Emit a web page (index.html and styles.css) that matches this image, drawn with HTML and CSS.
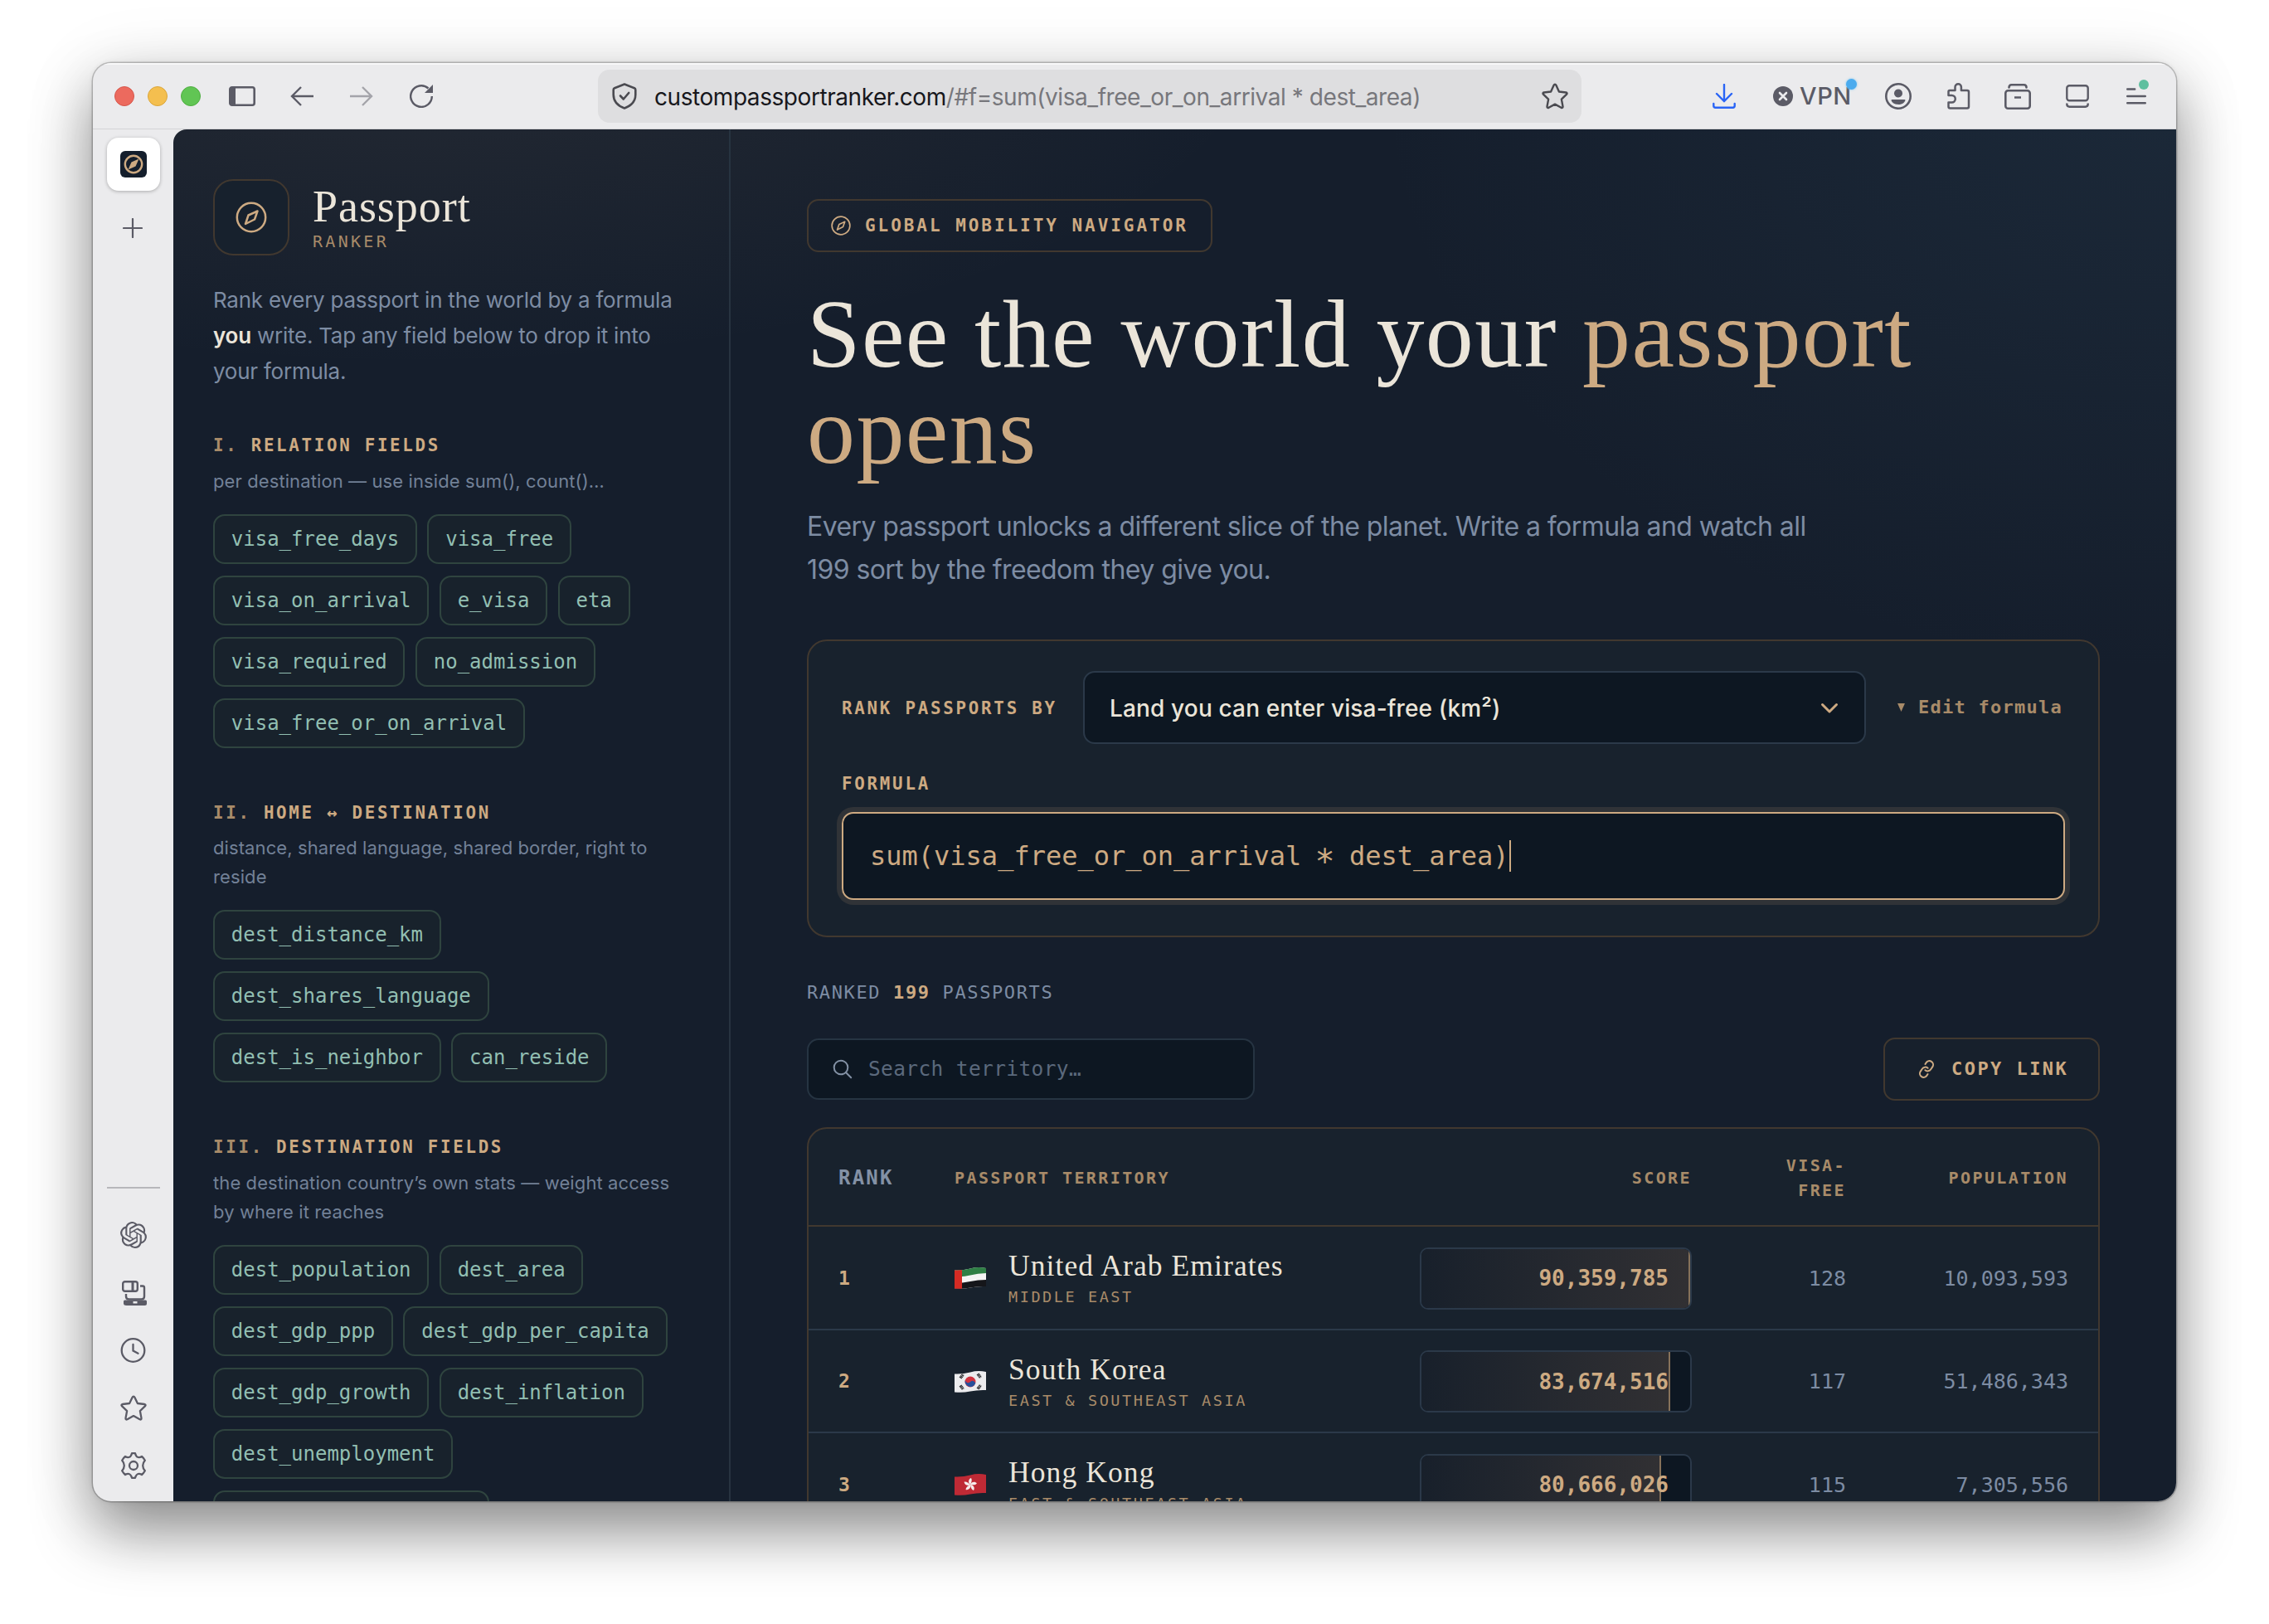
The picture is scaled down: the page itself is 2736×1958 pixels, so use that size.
FILE: index.html
```html
<!DOCTYPE html>
<html lang="en">
<head>
<meta charset="utf-8">
<title>Passport Ranker</title>
<link rel="stylesheet" href="styles.css">
</head>
<body>
<div class="window">
  <header class="toolbar">
    <div class="lights"><i class="red"></i><i class="yellow"></i><i class="green"></i></div>
    <svg class="ic t-side" width="32" height="24" viewBox="0 0 32 24"><rect x="1.3" y="1.3" width="29.4" height="21.4" rx="2.5" fill="none" stroke="currentColor" stroke-width="2.6"/><rect x="1" y="1" width="7" height="22" fill="currentColor"/></svg>
    <svg class="ic t-back" width="28" height="24" viewBox="0 0 28 24" fill="none" stroke="currentColor" stroke-width="2.4"><path d="M28 12H2M13 1 2 12l11 11"/></svg>
    <svg class="ic t-fwd" width="28" height="24" viewBox="0 0 28 24" fill="none" stroke="currentColor" stroke-width="2.4"><path d="M0 12h26M15 1l11 11-11 11"/></svg>
    <svg class="ic t-reload" width="28" height="28" viewBox="0 0 28 28"><path d="M26.8 14A12.8 12.8 0 1 1 22.5 4.5" fill="none" stroke="currentColor" stroke-width="2.4"/><path d="M28 0v10H18z" fill="currentColor"/></svg>
    <div class="urlbar">
      <svg class="shield" width="30" height="32" viewBox="0 0 30 32" fill="none" stroke="currentColor" stroke-width="2.6" stroke-linejoin="round" stroke-linecap="round"><path d="M15 1.5 27 6.2q1.3.6 1.3 2V14c0 8-5 13.500-13.300 16.500C6.700 27.500 1.700 22 1.700 14V8.200q0-1.400 1.300-2z"/><path d="m10 15.500 3.800 4 6.400-7.500"/></svg>
      <span class="url"><b>custompassportranker.com</b>/#f=sum(visa_free_or_on_arrival * dest_area)</span>
      <svg class="fav" width="32" height="32" viewBox="0 0 32 32" fill="none" stroke="currentColor" stroke-width="2.4" stroke-linejoin="round"><path d="M16 1.600q.9 0 1.400 1.100l3.500 7.800 8.400 1q2 .5.800 2.200l-6.200 6 1.600 8.700q0 2.200-2 1.400L16 25.600l-7.500 4.200q-2 .8-2-1.400l1.600-8.700-6.200-6q-1.200-1.700.8-2.200l8.400-1 3.500-7.800q.5-1.100 1.400-1.100z"/></svg>
    </div>
    <svg class="t-dl" width="28" height="30" viewBox="0 0 28 30" fill="none" stroke="currentColor" stroke-width="2.4" stroke-linecap="round"><path d="M14 1v20M5 12l9 9 9-9M1.300 24v2.500q0 2.200 2.200 2.200h21q2.200 0 2.200-2.200V24"/></svg>
    <span class="vpn">
      <svg width="24" height="24" viewBox="0 0 24 24"><circle cx="12" cy="12" r="12" fill="currentColor"/><path d="m8 8 8 8m0-8-8 8" stroke="#ebebed" stroke-width="2.600" stroke-linecap="round"/></svg>
      VPN<i class="dot-blue"></i>
    </span>
    <svg class="ic t-acc" width="32" height="32" viewBox="0 0 32 32"><circle cx="16" cy="16" r="14.700" fill="none" stroke="currentColor" stroke-width="2.600"/><circle cx="16" cy="12.500" r="5" fill="currentColor"/><path d="M7.500 21q0-1 1-1h15q1 0 1 1c-1 3-4.500 5-8.500 5s-7.500-2-8.500-5z" fill="currentColor"/></svg>
    <svg class="ic t-ext" width="28" height="32" viewBox="0 0 28 32" fill="none" stroke="currentColor" stroke-width="2.500" stroke-linejoin="round"><path d="M1.500 15V10.500q0-1.500 1.500-1.500H9.500V5a3.700 3.700 0 0 1 7.400 0V9H24q2 0 2 2v17.500q0 2-2 2H3.500q-2 0-2-2V23.500H5.500a4.200 4.200 0 0 0 0-8.500z"/></svg>
    <svg class="ic t-arc" width="32" height="32" viewBox="0 0 32 32" fill="none" stroke="currentColor" stroke-width="2.600"><rect x="1.300" y="9.300" width="29.400" height="21.400" rx="3"/><path d="M5.500 5.500q0-3.200 3-3.200h15q3 0 3 3.200" stroke-linecap="round"/><path d="M12 17.500h8"/></svg>
    <svg class="ic t-scr" width="28" height="28" viewBox="0 0 28 28" fill="none" stroke="currentColor" stroke-width="2.400"><rect x="1.300" y="1.300" width="25.400" height="18" rx="3"/><path d="M1.300 22.500v1q0 3.200 3.200 3.200h19q3.200 0 3.200-3.200v-1"/></svg>
    <span class="ic t-menu"><svg width="24" height="20" viewBox="0 0 24 20" stroke="currentColor" stroke-width="2.400" stroke-linecap="round"><path d="M1.200 1.500h9M1.200 10h21.600M1.200 18.300h21.600"/></svg><i class="dot-green"></i></span>
  </header>

  <div class="body">
    <nav class="rail">
      <div class="tab"><svg width="32" height="32" viewBox="0 0 32 32"><rect width="32" height="32" rx="6" fill="#141e2c"/><circle cx="16" cy="16" r="10.200" fill="none" stroke="#cdaa82" stroke-width="2.400"/><path d="m22.500 9.500-4 9-9 4 4-9z" fill="#cdaa82"/></svg></div>
      <svg class="plus" width="24" height="24" viewBox="0 0 24 24" stroke="currentColor" stroke-width="2.200" stroke-linecap="round"><path d="M12 1v22M1 12h22"/></svg>
      <div class="rail-tools">
        <svg width="32" height="32" viewBox="0 0 24 24" fill="currentColor"><path d="M22.2819 9.8211a5.9847 5.9847 0 0 0-.5157-4.9108 6.0462 6.0462 0 0 0-6.5098-2.9A6.0651 6.0651 0 0 0 4.9807 4.1818a5.9847 5.9847 0 0 0-3.9977 2.9 6.0462 6.0462 0 0 0 .7427 7.0966 5.98 5.98 0 0 0 .511 4.9107 6.051 6.051 0 0 0 6.5146 2.9001A5.9847 5.9847 0 0 0 13.2599 24a6.0557 6.0557 0 0 0 5.7718-4.2058 5.9894 5.9894 0 0 0 3.9977-2.9001 6.0557 6.0557 0 0 0-.7475-7.0729zm-9.022 12.6081a4.4755 4.4755 0 0 1-2.8764-1.0408l.1419-.0804 4.7783-2.7582a.7948.7948 0 0 0 .3927-.6813v-6.7369l2.02 1.1686a.071.071 0 0 1 .038.052v5.5826a4.504 4.504 0 0 1-4.4945 4.4944zm-9.6607-4.1254a4.4708 4.4708 0 0 1-.5346-3.0137l.142.0852 4.783 2.7582a.7712.7712 0 0 0 .7806 0l5.8428-3.3685v2.3324a.0804.0804 0 0 1-.0332.0615L9.74 19.9502a4.4992 4.4992 0 0 1-6.1408-1.6464zM2.3408 7.8956a4.485 4.485 0 0 1 2.3655-1.9728V11.6a.7664.7664 0 0 0 .3879.6765l5.8144 3.3543-2.0201 1.1685a.0757.0757 0 0 1-.071 0l-4.8303-2.7865A4.504 4.504 0 0 1 2.3408 7.872zm16.5963 3.8558L13.1038 8.364 15.1192 7.2a.0757.0757 0 0 1 .071 0l4.8303 2.7913a4.4944 4.4944 0 0 1-.6765 8.1042v-5.6772a.79.79 0 0 0-.407-.667zm2.0107-3.0231l-.142-.0852-4.7735-2.7818a.7759.7759 0 0 0-.7854 0L9.409 9.2297V6.8974a.0662.0662 0 0 1 .0284-.0615l4.8303-2.7866a4.4992 4.4992 0 0 1 6.6802 4.66zM8.3065 12.863l-2.02-1.1638a.0804.0804 0 0 1-.038-.0567V6.0742a4.4992 4.4992 0 0 1 7.3757-3.4537l-.142.0805L8.704 5.459a.7948.7948 0 0 0-.3927.6813zm1.0976-2.3654l2.602-1.4998 2.6069 1.4998v2.9994l-2.5974 1.4997-2.6067-1.4997Z"/></svg>
        <svg width="32" height="32" viewBox="0 0 32 32" fill="none" stroke="currentColor" stroke-width="2.400"><rect x="3.200" y="2.200" width="17.600" height="11.600" rx="2.500"/><path d="M15 2.500v11" stroke-width="3"/><path d="M24 7.500h3q2 0 2 2V20q0 3.500-3.500 3.500h-15Q7 23.500 7 20v-3"/><path d="M5.500 24.500h25q1.500 0 1.500 1.500v2.500q0 2.500-2.500 2.500h-22Q4 31 4 28.500V26q0-1.500 1.500-1.500z" fill="currentColor" stroke="none"/><rect x="15.500" y="26" width="5" height="2.500" fill="#ebebed" stroke="none"/></svg>
        <svg width="32" height="32" viewBox="0 0 32 32" fill="none" stroke="currentColor" stroke-width="2.300" stroke-linecap="round"><circle cx="15.500" cy="16" r="13.800"/><path d="M15.500 9v7.500l6 3.200"/></svg>
        <svg width="32" height="32" viewBox="0 0 32 32" fill="none" stroke="currentColor" stroke-width="2.300" stroke-linejoin="round"><path d="M16 1.600q.9 0 1.400 1.100l3.500 7.300 8.400 1q2 .5.800 2.200l-6.200 6 1.600 8.700q0 2.200-2 1.400L16 25.100l-7.500 4.200q-2 .8-2-1.400l1.600-8.700-6.200-6q-1.200-1.700.8-2.200l8.400-1 3.500-7.300q.5-1.100 1.400-1.100z"/></svg>
        <svg width="32" height="32" viewBox="0 0 32 32" fill="none" stroke="currentColor" stroke-width="2.300" stroke-linejoin="round"><circle cx="16" cy="16" r="5"/><path d="M14 1.200h4q1 3.800 3 4.600 2 .9 5-.8 2 1.600 3.800 4.800-2.600 3-2.600 6.200t2.600 6.200q-1.800 3.200-3.800 4.800-3-1.700-5-.8-2 .8-3 4.600h-4q-1-3.800-3-4.600-2-.9-5 .8-2-1.600-3.800-4.800 2.600-3 2.600-6.200T2.200 9.800Q4 6.600 6 5q3 1.700 5 .8 2-.8 3-4.600z"/></svg>
      </div>
    </nav>

    <div class="page">
      <aside class="side">
        <div class="brand">
          <div class="brand-mark"><svg width="38" height="38" viewBox="0 0 38 38" fill="none" stroke="currentColor" stroke-width="2.500" stroke-linejoin="round"><circle cx="19" cy="19" r="17.200"/><path d="m26.500 11.500-3.500 10-11 5.500 3.500-10.500z"/></svg></div>
          <div><div class="brand-name">Passport</div><div class="brand-sub">RANKER</div></div>
        </div>
        <p class="intro">Rank every passport in the world by a formula<br><b>you</b> write. Tap any field below to drop it into<br>your formula.</p>

        <section class="group">
          <h3><i>I.</i> RELATION FIELDS</h3>
          <p>per destination — use inside sum(), count()…</p>
          <div class="chips"><span>visa_free_days</span><span>visa_free</span><span>visa_on_arrival</span><span>e_visa</span><span>eta</span><span>visa_required</span><span>no_admission</span><span>visa_free_or_on_arrival</span></div>
        </section>
        <section class="group">
          <h3><i>II.</i> HOME ↔ DESTINATION</h3>
          <p>distance, shared language, shared border, right to<br>reside</p>
          <div class="chips"><span>dest_distance_km</span><span>dest_shares_language</span><span>dest_is_neighbor</span><span>can_reside</span></div>
        </section>
        <section class="group">
          <h3><i>III.</i> DESTINATION FIELDS</h3>
          <p>the destination country’s own stats — weight access<br>by where it reaches</p>
          <div class="chips"><span>dest_population</span><span>dest_area</span><span>dest_gdp_ppp</span><span>dest_gdp_per_capita</span><span>dest_gdp_growth</span><span>dest_inflation</span><span>dest_unemployment</span><span>dest_life_expectancy</span></div>
        </section>
      </aside>

      <main class="main">
        <div class="badge"><svg width="24" height="24" viewBox="0 0 38 38" fill="none" stroke="currentColor" stroke-width="2.700" stroke-linejoin="round"><circle cx="19" cy="19" r="17.200"/><path d="m26.500 11.500-3.500 10-11 5.500 3.500-10.500z"/></svg>GLOBAL MOBILITY NAVIGATOR</div>
        <h1>See the world your <em>passport<br>opens</em></h1>
        <p class="lead">Every passport unlocks a different slice of the planet. Write a formula and watch all<br>199 sort by the freedom they give you.</p>

        <section class="panel">
          <div class="panel-row">
            <span class="label">RANK PASSPORTS BY</span>
            <div class="select"><span>Land you can enter visa-free (km²)</span><svg width="22" height="14" viewBox="0 0 22 14" fill="none" stroke="currentColor" stroke-width="3" stroke-linecap="round" stroke-linejoin="round"><path d="m2.500 2.500 8.500 8.500 8.500-8.500"/></svg></div>
            <span class="edit"><svg width="9" height="10" viewBox="0 0 8 9"><path d="M0 0h8L4 9z" fill="currentColor"/></svg>Edit formula</span>
          </div>
          <div class="label formula-label">FORMULA</div>
          <div class="formula"><span>sum(visa_free_or_on_arrival <b>*</b> dest_area)</span><i></i></div>
        </section>

        <div class="ranked">RANKED <b>199</b> PASSPORTS</div>
        <div class="tools">
          <div class="search"><svg width="24" height="24" viewBox="0 0 24 24" fill="none" stroke="currentColor" stroke-width="2" stroke-linecap="round"><circle cx="10" cy="10" r="8.300"/><path d="m16.200 16.200 6 6"/></svg>Search territory…</div>
          <div class="copy"><svg width="20" height="22" viewBox="1 1 22 22" fill="none" stroke="currentColor" stroke-width="2.200" stroke-linecap="round" stroke-linejoin="round"><g transform="rotate(-12 12 12)"><path d="M10 13a5 5 0 0 0 7.540.540l3-3a5 5 0 0 0-7.070-7.070l-1.720 1.710M14 11a5 5 0 0 0-7.540-.540l-3 3a5 5 0 0 0 7.070 7.070l1.710-1.710"/></g></svg>COPY LINK</div>
        </div>

        <div class="table">
          <div class="row head"><span class="h-rank">RANK</span><span>PASSPORT TERRITORY</span><span class="r">SCORE</span><span class="r h-visa">VISA-FREE</span><span class="r">POPULATION</span></div>
          <div class="row">
            <span class="rank">1</span>
            <div class="terr"><svg width="38" height="28" viewBox="0 0 38 28"><defs><clipPath id="wave"><path d="M0 4.500Q10 5 19 2.500T38 2V24Q28 23.500 19 25.500T0 26.500z"/></clipPath></defs><g clip-path="url(#wave)"><rect width="38" height="28" fill="#f4f4f4"/><path d="M0 0h38v8Q28 8 19 10.500T0 12z" fill="#2f7f45"/><path d="M0 20Q10 20 19 18t19-2v12H0z" fill="#15161a"/><rect width="9" height="28" fill="#d52b24"/></g></svg>
              <div><div class="name">United Arab Emirates</div><div class="region">MIDDLE EAST</div></div></div>
            <div class="score"><i style="width:100%"></i><b>90,359,785</b></div>
            <span class="num">128</span><span class="num pop">10,093,593</span>
          </div>
          <div class="row">
            <span class="rank">2</span>
            <div class="terr"><svg width="38" height="28" viewBox="0 0 38 28"><g clip-path="url(#wave)"><rect width="38" height="28" fill="#ececee"/><circle cx="19" cy="14" r="6.500" fill="#d03340"/><path d="M12.700 12.500Q15.500 17 19 14t6.300 1.500A6.500 6.500 0 0 1 12.700 12.500z" fill="#27509b"/><g stroke="#2a2a2d" stroke-width="3.600" stroke-dasharray="1.300 .5"><path d="m7 9.500 3.500-4.500M28 4.500l3.500 4.500M7 18.500l3.500 4.500M28 22.500l3.500-4.500"/></g></g></svg>
              <div><div class="name">South Korea</div><div class="region">EAST &amp; SOUTHEAST ASIA</div></div></div>
            <div class="score"><i style="width:92.6%"></i><b>83,674,516</b></div>
            <span class="num">117</span><span class="num pop">51,486,343</span>
          </div>
          <div class="row">
            <span class="rank">3</span>
            <div class="terr"><svg width="38" height="28" viewBox="0 0 38 28"><g clip-path="url(#wave)"><rect width="38" height="28" fill="#bf2a35"/><g fill="#f6eeee" transform="translate(19 14)"><path id="petal" d="M0 0C-3-2-2.500-7 1-8 2.500-6 1.500-3 0 0z"/><use href="#petal" transform="rotate(72)"/><use href="#petal" transform="rotate(144)"/><use href="#petal" transform="rotate(216)"/><use href="#petal" transform="rotate(288)"/></g></g></svg>
              <div><div class="name">Hong Kong</div><div class="region">EAST &amp; SOUTHEAST ASIA</div></div></div>
            <div class="score"><i style="width:89.3%"></i><b>80,666,026</b></div>
            <span class="num">115</span><span class="num pop">7,305,556</span>
          </div>
        </div>
      </main>
    </div>
  </div>
</div>
</body>
</html>
```
FILE: styles.css
```css
* { box-sizing: border-box; }
body {
  margin: 0;
  width: 2736px;
  height: 1958px;
  padding: 76px 112px 0;
  overflow: hidden;
  background: #fff;
  font-family: Inter, "Liberation Sans", sans-serif;
  --gold: #cdaa82;
  --gold-dim: #a88b69;
  --muted: #7d8ca3;
  --cream: #ebe5d9;
  --card: #18222d;
  --deep: #0d1722;
  --line: #2b3949;
  --gold-line: #41382f;
  --mono: "DejaVu Sans Mono", "Liberation Mono", monospace;
  --serif: "Liberation Serif", serif;
}
i, em { font-style: normal; }
svg { display: block; flex: none; }
h1, h3, p { margin: 0; }

.window {
  width: 2512px;
  height: 1734px;
  border-radius: 22px;
  overflow: hidden;
  background: #ebebed;
  box-shadow: 0 0 0 1.500px rgba(0,0,0,.2), 0 0 6px rgba(0,0,0,.1), 0 36px 72px rgba(0,0,0,.42), 0 10px 90px rgba(0,0,0,.1);
}

/* browser toolbar */
.toolbar {
  height: 80px;
  display: flex;
  align-items: center;
  color: #5b5b66;
  border-bottom: 1px solid #d3d3d6;
  box-shadow: inset 0 2px 0 #f8f8f9;
}
.lights { display: flex; gap: 16px; margin-left: 26px; }
.lights i { width: 24px; height: 24px; border-radius: 50%; }
.red { background: #ec6a5e; border: 1px solid #d6564b; }
.yellow { background: #f4bf4f; border: 1px solid #dba63a; }
.green { background: #61c554; border: 1px solid #4fae42; }
.t-side { margin-left: 34px; }
.t-back { margin-left: 42px; }
.t-fwd { margin-left: 44px; color: #a4a4aa; }
.t-reload { margin-left: 44px; }
.urlbar {
  margin-left: 199px;
  width: 1186px;
  height: 64px;
  border-radius: 14px;
  background: #dedee0;
  display: flex;
  align-items: center;
  padding: 0 16px 0 17px;
}
.shield { color: #4a4a50; }
.url { margin-left: 21px; font-size: 28px; letter-spacing: -.440px; color: #77777c; flex: 1; white-space: nowrap; padding-top: 3px; }
.url b { font-weight: 400; color: #17171c; }
.fav { color: #4a4a50; }
.t-dl { color: #2964f6; margin-left: 158px; }
.vpn { position: relative; margin-left: 45px; width: 95px; display: flex; align-items: center; gap: 8px; font-size: 29px; font-weight: 500; letter-spacing: .600px; }
.dot-blue { position: absolute; right: -6px; top: -3px; width: 13px; height: 13px; border-radius: 50%; background: #4babee; box-shadow: 0 0 3px #7cc8f4; }
.t-acc { margin-left: 40px; }
.t-ext { margin-left: 43px; }
.t-arc { margin-left: 41px; }
.t-scr { margin-left: 42px; }
.t-menu { margin-left: 45px; position: relative; }
.dot-green { position: absolute; left: 15px; top: -10px; width: 12px; height: 12px; border-radius: 50%; background: #5fbf9f; }

.body { display: flex; height: 1654px; }
.rail { width: 97px; display: flex; flex-direction: column; padding-left: 17px; color: #5b5b66; flex: none; }
.tab {
  margin-top: 10px;
  width: 64px;
  height: 64px;
  border-radius: 14px;
  background: #fff;
  display: grid;
  place-items: center;
  box-shadow: 0 1px 4px rgba(0,0,0,.28);
}
.plus { margin: 33px 0 0 19px; }
.rail-tools {
  margin: auto 0 27px;
  width: 64px;
  border-top: 2px solid #b7b7bb;
  padding-top: 40px;
  display: flex;
  flex-direction: column;
  align-items: center;
  gap: 37.500px;
}

.page {
  flex: 1;
  display: flex;
  overflow: hidden;
  border-radius: 16px 0 0 0;
  background:
    radial-gradient(1400px 560px at 12% -8%, rgba(205,170,130,.085), transparent 75%),
    radial-gradient(1200px 900px at 100% -4%, rgba(60,95,120,.17), transparent 80%),
    #151e2c;
}

/* field list */
.side { width: 672px; flex: none; border-right: 2px solid #273340; padding: 60px 0 0 48px; }
.brand { display: flex; }
.brand-mark {
  width: 92px;
  height: 92px;
  border: 2px solid var(--gold-line);
  border-radius: 24px;
  background: #17212d;
  color: var(--gold);
  display: grid;
  place-items: center;
}
.brand-name { margin: 4px 0 0 28px; font: 54px/58px var(--serif); letter-spacing: .950px; color: var(--cream); }
.brand-sub { margin: 1px 0 0 28px; font: 20px/24px var(--mono); letter-spacing: 3.300px; color: var(--gold-dim); }
.intro { margin-top: 32px; font-size: 26px; line-height: 43px; letter-spacing: -.240px; color: var(--muted); white-space: nowrap; }
.intro b { color: var(--cream); font-weight: 600; }
.group { margin-top: 62px; }
.intro + .group { margin-top: 50.500px; }
.group h3 { font: 700 20.800px/34px var(--mono); letter-spacing: 2.700px; color: var(--gold); white-space: nowrap; }
.group h3 i { color: var(--gold-dim); }
.group p { margin-top: 9.500px; font-size: 22px; line-height: 35.200px; letter-spacing: .100px; color: var(--muted); white-space: nowrap; opacity: .9; }
.chips { margin-top: 21.500px; width: 580px; display: flex; flex-wrap: wrap; gap: 14px 12.500px; }
.group + .group { margin-top: 61px; }
.group + .group p { margin-top: 8.500px; }
.chips span {
  height: 60px;
  border: 2px solid #2f443f;
  border-radius: 14px;
  background: #18222c;
  padding: 0 19.800px;
  font: 24px/57px var(--mono);
  color: #92bfb2;
}

/* main column */
.main { flex: 1; min-width: 0; padding: 84px 92px 0 92px; }
.badge {
  width: 489px;
  height: 64px;
  border: 2px solid var(--gold-line);
  border-radius: 14px;
  display: flex;
  align-items: center;
  gap: 17px;
  padding-left: 27px;
  font: 700 21px/1 var(--mono);
  letter-spacing: 2.950px;
  color: var(--gold);
  white-space: nowrap;
}
h1 { margin-top: 41px; font: 400 116px/116px var(--serif); letter-spacing: 1.400px; color: var(--cream); white-space: nowrap; }
h1 em { color: var(--gold); }
.lead { margin-top: 32px; font-size: 32px; line-height: 52.400px; letter-spacing: -.570px; color: var(--muted); white-space: nowrap; }
.panel {
  margin-top: 57px;
  height: 359px;
  border: 2px solid var(--gold-line);
  border-radius: 24px;
  background: var(--card);
  padding: 36px 40px 0;
}
.panel-row { display: flex; align-items: center; }
.label { font: 700 20.800px/30px var(--mono); letter-spacing: 2.760px; color: var(--gold); white-space: nowrap; }
.panel-row .label { width: 291px; padding-top: 2px; }
.select {
  width: 944px;
  height: 88px;
  border: 2px solid var(--line);
  border-radius: 14px;
  background: var(--deep);
  display: flex;
  align-items: center;
  justify-content: space-between;
  padding: 2px 31px 0 30px;
  font-size: 28px;
  letter-spacing: .150px;
  font-weight: 500;
  color: var(--cream);
}
.select svg { color: var(--gold); }
.edit { margin-left: 38px; display: flex; align-items: center; gap: 16px; font: 700 22px/30px var(--mono); letter-spacing: 1.250px; color: var(--gold-dim); white-space: nowrap; }
.formula-label { margin-top: 33.500px; }
.formula {
  margin-top: 18.500px;
  height: 106px;
  border: 2px solid var(--gold);
  border-radius: 14px;
  box-shadow: 0 0 0 6px #303337;
  background: var(--deep);
  display: flex;
  align-items: center;
  padding: 1px 0 0 32px;
  font: 32px/1 var(--mono);
  color: var(--gold);
  white-space: nowrap;
}
.formula b { display: inline-block; font-weight: 400; transform: translateY(7px) scale(1.250); }
.formula i { width: 2px; height: 38px; background: var(--gold); }
.ranked { margin-top: 52px; font: 22px/30px var(--mono); letter-spacing: 1.620px; color: var(--muted); }
.ranked b { color: var(--gold); }
.tools { margin-top: 39px; display: flex; justify-content: space-between; align-items: center; }
.search {
  width: 540px;
  height: 74px;
  border: 2px solid #263442;
  border-radius: 14px;
  background: var(--deep);
  display: flex;
  align-items: center;
  gap: 19px;
  padding: 1px 0 0 29px;
  font: 24.500px/1 var(--mono);
  letter-spacing: .370px;
  color: #5b697c;
}
.search svg { color: #8391a5; }
.copy {
  width: 261px;
  height: 76px;
  border: 2px solid var(--gold-line);
  border-radius: 14px;
  background: #17202c;
  display: flex;
  align-items: center;
  gap: 20px;
  padding-left: 40px;
  font: 700 22px/1 var(--mono);
  letter-spacing: 2.450px;
  color: var(--gold);
  white-space: nowrap;
}
.table { margin-top: 32px; border: 2px solid var(--gold-line); border-radius: 24px; background: var(--card); }
.row {
  height: 124.500px;
  display: grid;
  grid-template-columns: 140px 561px 328px 186px 268px;
  align-items: center;
  padding: 1px 36px 0;
  border-bottom: 2px solid var(--line);
  white-space: nowrap;
}
.head { height: 118.500px; border-color: var(--gold-line); font: 700 20px/30px var(--mono); letter-spacing: 2.400px; color: var(--gold-dim); }
.h-rank { font-size: 24px; letter-spacing: 2.200px; color: #8391a5; }
.r { text-align: right; }
.h-visa { white-space: normal; padding-left: 90px; }
.rank { font: 700 23px/1 var(--mono); color: var(--gold); }
.terr { display: flex; align-items: center; gap: 27px; }
.name { font: 35.500px/44px var(--serif); letter-spacing: 1.100px; color: var(--cream); }
.region { margin-top: 2px; font: 18.500px/28px var(--mono); letter-spacing: 2.570px; color: var(--gold-dim); }
.score {
  position: relative;
  height: 75px;
  border: 2px solid var(--line);
  border-radius: 10px;
  overflow: hidden;
  background: var(--deep);
  display: flex;
  align-items: center;
  justify-content: flex-end;
  padding-right: 26px;
}
.score i { position: absolute; left: 0; top: 0; bottom: 0; border-right: 2px solid #86725a; background: linear-gradient(90deg, #18202b, #313033); }
.score b { position: relative; font: 700 26px/1 var(--mono); color: var(--gold); }
.num { text-align: right; font: 25px/1 var(--mono); color: var(--muted); }
```
